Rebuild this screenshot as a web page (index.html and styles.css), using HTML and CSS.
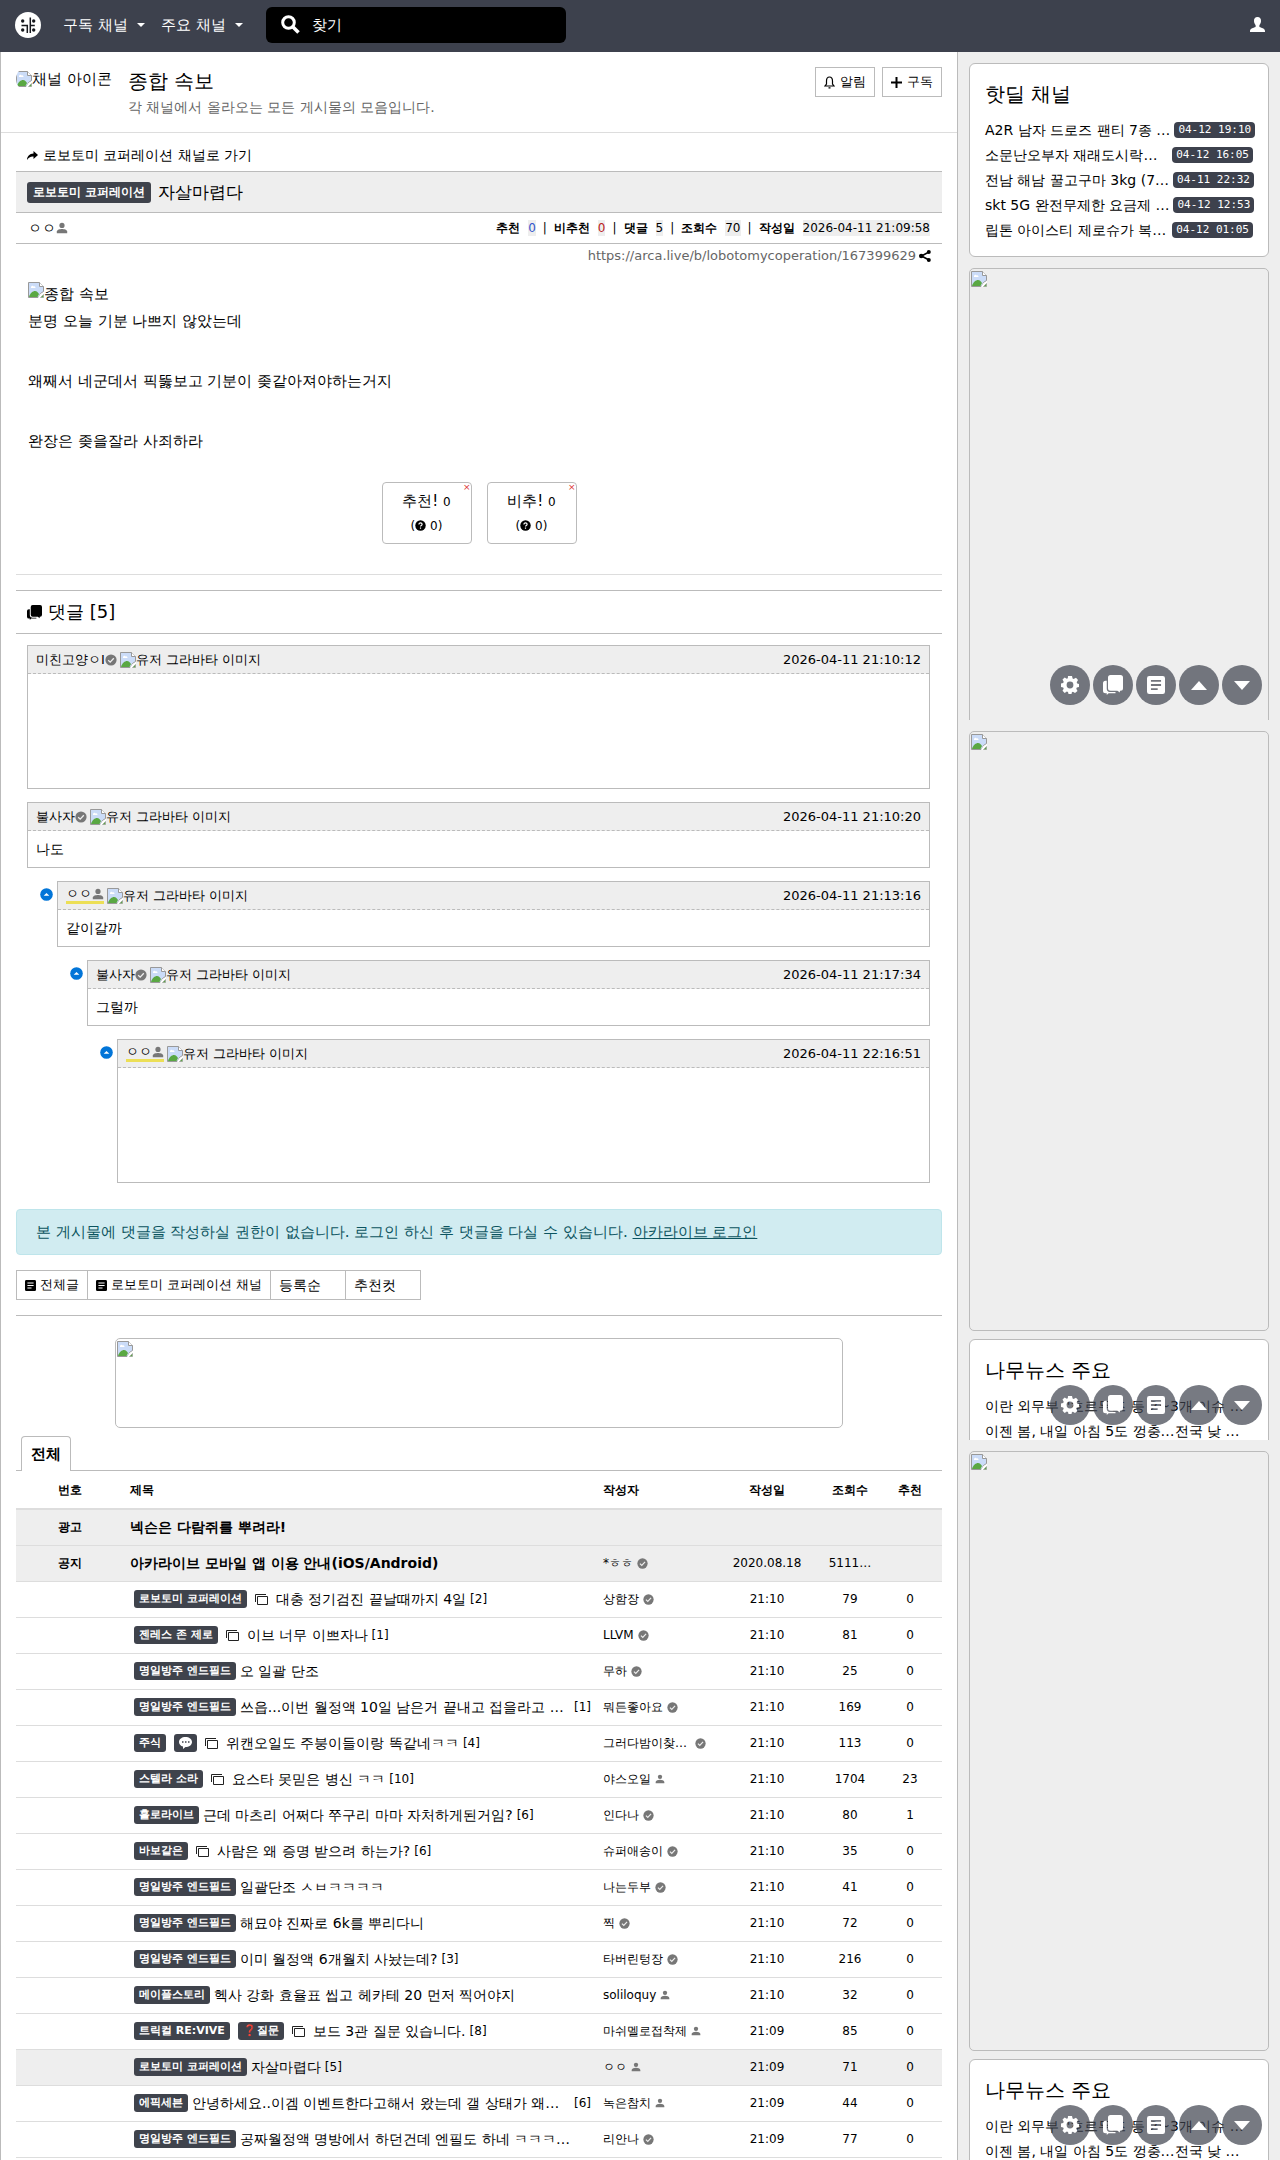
FILE: index.html
```
<!doctype html>
<html lang="ko">
<head>
    <meta charset="UTF-8">
    <meta name="viewport" content="width=device-width, initial-scale=1.0">
    <title>종합 속보 - 아카라이브</title>
    <link rel="stylesheet" href="styles.css">
</head>
<body>
<svg class="defs" aria-hidden="true">
    <symbol id="i-check" viewBox="0 0 12 12"><circle cx="6" cy="6" r="5.6" fill="#777"/><path d="M3.2 6.2l2 1.9 3.6-3.9" fill="none" stroke="#eee" stroke-width="1.3"/></symbol>
    <symbol id="i-user" viewBox="0 0 12 12"><circle cx="6" cy="3.4" r="2.6"/><path d="M.8 11.2V9.6C.8 7.8 4 7 6 7s5.2.8 5.2 2.6v1.6z"/></symbol>
    <symbol id="i-broken" viewBox="0 0 16 16"><path d="M.5.5h11l4 4v5l-3 2-2 4H.5z" fill="#cbdcf8" stroke="#999"/><path d="M11.5.5v4h4" fill="#fff" stroke="#999"/><path d="M3 5.5c0-2 2-2.500 2.500-1 1.500-.5 2 .5 2 1.500H3z" fill="#fff"/><path d="M1 15c1-4 4-6 6-6s3 1.500 4 3l-1.500 3z" fill="#5aa843"/><path d="M16 10l-4 2.500-2 3.500h2l4-4z" fill="#fff"/><path d="M12.500 15.500h3v-3z" fill="#5aa843" stroke="#999" stroke-width=".6"/></symbol>
    <symbol id="i-chat" viewBox="0 0 16 16"><path d="M6 0h8a2 2 0 0 1 2 2v8.500a2 2 0 0 1-2 2h-.5V14l-2-1.500H6a2 2 0 0 1-2-2V2a2 2 0 0 1 2-2z"/><path d="M3 4.500v6.500a2.500 2.500 0 0 0 2.500 2.500h4.500V14.500H4.500L3 16v-1.500H2a2 2 0 0 1-2-2V6.500a2 2 0 0 1 2-2z"/></symbol>
    <symbol id="i-list" viewBox="0 0 16 16"><path fill-rule="evenodd" d="M2 0h12a2 2 0 0 1 2 2v12a2 2 0 0 1-2 2H2a2 2 0 0 1-2-2V2a2 2 0 0 1 2-2zm1.500 3.500v1.600h9V3.500zm0 3.700v1.600h9V7.200zm0 3.700v1.600h6v-1.600z"/></symbol>
    <symbol id="i-gear" viewBox="0 0 18 18"><path fill-rule="evenodd" d="M7 0h4l.6 2.400 1 .5L15 1.700 17 4l-1.300 2.200.5 1.200L18 8v3l-2.200.6-.5 1.100L16.500 15 14 17l-2.100-1.200-1 .4L10.500 18h-3L7 16l-1.200-.4L3.700 17 1.500 14.700l1.200-2-.5-1.200L0 11V7.500l2.200-.6.5-1.100L1.500 3.500 3.700 1.500l2.100 1.200 1-.4zM9 5.600a3.400 3.400 0 1 0 0 6.800 3.400 3.400 0 0 0 0-6.800z"/></symbol>
    <symbol id="i-up" viewBox="0 0 16 9"><path d="M0 9L8 0l8 9z"/></symbol>
    <symbol id="i-down" viewBox="0 0 16 9"><path d="M0 0l8 9 8-9z"/></symbol>
    <symbol id="i-copy" viewBox="0 0 13 11"><path d="M.5 8V.5h10.500M2.500 2.500h10v8h-10z" fill="none" stroke="#222"/></symbol>
    <symbol id="i-reply" viewBox="0 0 13 13"><circle cx="6.500" cy="6.500" r="6.300" fill="#0275d8"/><path d="M3.700 7.700l2.800-2.600 2.800 2.600z" fill="#fff"/></symbol>
    <symbol id="i-help" viewBox="0 0 12 12"><circle cx="6" cy="6" r="5.700"/><path d="M4.300 4.800c0-2.300 3.500-2.200 3.400 0C7.700 5.900 6 6 6 7.200M6 8.200v1.300" fill="none" stroke="#fff" stroke-width="1.300"/></symbol>
</svg>

<nav class="navbar">
    <a class="logo" href="#" aria-label="아카라이브">
        <svg width="26" height="26" viewBox="0 0 26 26"><circle cx="13" cy="13" r="13" fill="#fff"/><g fill="#16181d"><circle cx="7.700" cy="9" r="1.700"/><circle cx="18.700" cy="9" r="1.700"/><circle cx="18.700" cy="18" r="1.700"/><circle cx="7.700" cy="18" r="1.700"/></g><path d="M6.500 13.500h5.800V21M15.300 5.500V21M15.300 13.500h4.500" fill="none" stroke="#16181d" stroke-width="1.500"/></svg>
    </a>
    <button class="menu" type="button">구독 채널<span class="caret"></span></button>
    <button class="menu" type="button">주요 채널<span class="caret"></span></button>
    <form class="search">
        <svg width="19" height="19" viewBox="0 0 19 19"><circle cx="7.500" cy="7.500" r="5.800" fill="none" stroke="#fff" stroke-width="3"/><path d="M12 12l5.500 5.500" stroke="#fff" stroke-width="3.600"/></svg>
        <input type="search" placeholder="찾기" aria-label="찾기">
    </form>
    <a class="account" href="#" aria-label="로그인"><svg width="15" height="15" viewBox="0 0 15 15"><path d="M7.500 0C10 0 11.200 1.800 11 4.200c-.1 1.900-1 3-1.600 3.800v2c2.400.9 5.600 1.500 5.600 4v1H0v-1c0-2.500 3.200-3.100 5.600-4V8C5 7.200 4.100 6.100 4 4.200 3.800 1.800 5 0 7.500 0z" fill="#fff"/></svg></a>
</nav>

<div class="content-wrapper">
    <main class="board">
        <header class="board-title">
            <span class="channel-icon"><svg width="16" height="16"><use href="#i-broken"/></svg>채널 아이콘</span>
            <div class="head">
                <h1>종합 속보</h1>
                <p>각 채널에서 올라오는 모든 게시물의 모음입니다.</p>
            </div>
            <div class="board-btns">
                <button type="button"><svg width="11" height="13" viewBox="0 0 11 13"><path d="M5.500 1C3.300 1 2.500 3 2.500 5v3L1 10h9L8.500 8V5c0-2-.8-4-3-4zM4.500 11.800h2" fill="none" stroke="#000" stroke-width="1.200"/></svg>알림</button>
                <button type="button"><svg width="11" height="11" viewBox="0 0 11 11"><path d="M5.500 0v11M0 5.500h11" stroke="#000" stroke-width="2"/></svg>구독</button>
            </div>
        </header>

        <article class="article">
            <a class="goto" href="#"><svg width="11" height="9" viewBox="0 0 11 9"><path d="M6.500 0L11 4 6.500 8V5.500C3.500 5.300 1.500 6.500 0 9c0-3.500 2.500-6.300 6.500-6.500z"/></svg>로보토미 코퍼레이션 채널로 가기</a>
            <div class="article-head">
                <span class="badge badge-lg">로보토미 코퍼레이션</span>
                <h2>자살마렵다</h2>
            </div>
            <div class="article-info">
                <span class="writer">ㅇㅇ<svg class="gray" width="12" height="12"><use href="#i-user"/></svg></span>
                <dl>
                    <dt>추천</dt><dd class="blue">0</dd>
                    <dt>비추천</dt><dd class="red">0</dd>
                    <dt>댓글</dt><dd>5</dd>
                    <dt>조회수</dt><dd>70</dd>
                    <dt>작성일</dt><dd>2026-04-11 21:09:58</dd>
                </dl>
            </div>
            <div class="article-link"><a href="#">https://arca.live/b/lobotomycoperation/167399629</a><svg width="12" height="12" viewBox="0 0 12 12"><path d="M10 2L2.500 6l7.500 4" fill="none" stroke="#000" stroke-width="1.600"/><circle cx="9.800" cy="2" r="2"/><circle cx="2.200" cy="6" r="2.200"/><circle cx="9.800" cy="10" r="2"/></svg></div>
            <div class="article-body">
                <div class="alt"><svg width="16" height="16"><use href="#i-broken"/></svg>종합 속보</div>
                <p>분명 오늘 기분 나쁘지 않았는데</p>
                <p>왜째서 네군데서 픽뚫보고 기분이 좆같아져야하는거지</p>
                <p>완장은 좆을잘라 사죄하라</p>
            </div>
            <div class="vote">
                <button type="button"><span class="x">×</span><span>추천! <small>0</small></span><small>(<svg width="11" height="11"><use href="#i-help"/></svg> 0)</small></button>
                <button type="button"><span class="x">×</span><span>비추! <small>0</small></span><small>(<svg width="11" height="11"><use href="#i-help"/></svg> 0)</small></button>
            </div>
        </article>

        <section class="comments">
            <h3><svg width="15" height="15"><use href="#i-chat"/></svg>댓글 [5]</h3>
            <div class="comment-list">
                <div class="comment tall">
                    <div class="box">
                        <div class="info"><span class="user">미친고양ㅇI<svg width="12" height="12"><use href="#i-check"/></svg></span><span class="alt"><svg width="16" height="16"><use href="#i-broken"/></svg>유저 그라바타 이미지</span><time>2026-04-11 21:10:12</time></div>
                        <div class="message"></div>
                    </div>
                </div>
                <div class="comment">
                    <div class="box">
                        <div class="info"><span class="user">불사자<svg width="12" height="12"><use href="#i-check"/></svg></span><span class="alt"><svg width="16" height="16"><use href="#i-broken"/></svg>유저 그라바타 이미지</span><time>2026-04-11 21:10:20</time></div>
                        <div class="message">나도</div>
                    </div>
                </div>
                <div class="comment depth1">
                    <svg class="arrow" width="13" height="13"><use href="#i-reply"/></svg>
                    <div class="box">
                        <div class="info"><span class="user mark">ㅇㅇ<svg class="gray" width="12" height="12"><use href="#i-user"/></svg></span><span class="alt"><svg width="16" height="16"><use href="#i-broken"/></svg>유저 그라바타 이미지</span><time>2026-04-11 21:13:16</time></div>
                        <div class="message">같이갈까</div>
                    </div>
                </div>
                <div class="comment depth2">
                    <svg class="arrow" width="13" height="13"><use href="#i-reply"/></svg>
                    <div class="box">
                        <div class="info"><span class="user">불사자<svg width="12" height="12"><use href="#i-check"/></svg></span><span class="alt"><svg width="16" height="16"><use href="#i-broken"/></svg>유저 그라바타 이미지</span><time>2026-04-11 21:17:34</time></div>
                        <div class="message">그럴까</div>
                    </div>
                </div>
                <div class="comment depth3 tall">
                    <svg class="arrow" width="13" height="13"><use href="#i-reply"/></svg>
                    <div class="box">
                        <div class="info"><span class="user mark">ㅇㅇ<svg class="gray" width="12" height="12"><use href="#i-user"/></svg></span><span class="alt"><svg width="16" height="16"><use href="#i-broken"/></svg>유저 그라바타 이미지</span><time>2026-04-11 22:16:51</time></div>
                        <div class="message"></div>
                    </div>
                </div>
            </div>
        </section>

        <div class="alert">본 게시물에 댓글을 작성하실 권한이 없습니다. 로그인 하신 후 댓글을 다실 수 있습니다. <a href="#">아카라이브 로그인</a></div>

        <div class="btns-board">
            <a href="#"><svg width="11" height="11"><use href="#i-list"/></svg>전체글</a>
            <a href="#"><svg width="11" height="11"><use href="#i-list"/></svg>로보토미 코퍼레이션 채널</a>
            <select aria-label="정렬"><option>등록순</option></select>
            <select aria-label="추천컷"><option>추천컷</option></select>
        </div>

        <div class="banner"><div class="ad"><svg width="16" height="16"><use href="#i-broken"/></svg></div></div>

        <div class="tabs"><a href="#">전체</a></div>

        <table class="list">
            <colgroup><col class="c-id"><col><col class="c-author"><col class="c-time"><col class="c-view"><col class="c-rate"></colgroup>
            <thead>
                <tr><th>번호</th><th class="l">제목</th><th class="l">작성자</th><th>작성일</th><th>조회수</th><th>추천</th></tr>
            </thead>
            <tbody>
                <tr class="notice"><td>광고</td><td class="l"><a href="#">넥슨은 다람쥐를 뿌려라!</a></td><td></td><td></td><td></td><td></td></tr>
                <tr class="notice"><td>공지</td><td class="l"><a href="#">아카라이브 모바일 앱 이용 안내(iOS/Android)</a></td><td class="l"><div class="author"><span>*ㅎㅎ</span><svg width="11" height="11"><use href="#i-check"/></svg></div></td><td>2020.08.18</td><td>5111…</td><td></td></tr>
                <tr><td></td><td class="l"><div class="title"><span class="badge">로보토미 코퍼레이션</span><svg class="copy" width="13" height="11"><use href="#i-copy"/></svg><a href="#">대충 정기검진 끝날때까지 4일</a><small>[2]</small></div></td><td class="l"><div class="author"><span>상함장</span><svg width="11" height="11"><use href="#i-check"/></svg></div></td><td>21:10</td><td>79</td><td>0</td></tr>
                <tr><td></td><td class="l"><div class="title"><span class="badge">젠레스 존 제로</span><svg class="copy" width="13" height="11"><use href="#i-copy"/></svg><a href="#">이브 너무 이쁘자나</a><small>[1]</small></div></td><td class="l"><div class="author"><span>LLVM</span><svg width="11" height="11"><use href="#i-check"/></svg></div></td><td>21:10</td><td>81</td><td>0</td></tr>
                <tr><td></td><td class="l"><div class="title"><span class="badge">명일방주 엔드필드</span><a href="#">오 일괄 단조</a></div></td><td class="l"><div class="author"><span>무하</span><svg width="11" height="11"><use href="#i-check"/></svg></div></td><td>21:10</td><td>25</td><td>0</td></tr>
                <tr><td></td><td class="l"><div class="title"><span class="badge">명일방주 엔드필드</span><a href="#">쓰읍...이번 월정액 10일 남은거 끝내고 접을라고 …</a><small class="end">[1]</small></div></td><td class="l"><div class="author"><span>뭐든좋아요</span><svg width="11" height="11"><use href="#i-check"/></svg></div></td><td>21:10</td><td>169</td><td>0</td></tr>
                <tr><td></td><td class="l"><div class="title"><span class="badge">주식</span><span class="badge sub"><svg width="13" height="12" viewBox="0 0 13 12"><path d="M6.500 0C10 0 13 2 13 5s-3 5-6.500 5L4 12V9.600C1.500 9 0 7 0 5c0-3 3-5 6.500-5z" fill="#fff"/><path d="M3 5h1.500M6 5h1.500M9 5h1.500" stroke="#3f434c" stroke-width="1.500"/></svg></span><svg class="copy" width="13" height="11"><use href="#i-copy"/></svg><a href="#">위캔오일도 주붕이들이랑 똑같네ㅋㅋ</a><small>[4]</small></div></td><td class="l"><div class="author"><span>그러다밤이찾…</span><svg class="end" width="11" height="11"><use href="#i-check"/></svg></div></td><td>21:10</td><td>113</td><td>0</td></tr>
                <tr><td></td><td class="l"><div class="title"><span class="badge">스텔라 소라</span><svg class="copy" width="13" height="11"><use href="#i-copy"/></svg><a href="#">요스타 못믿은 병신 ㅋㅋ</a><small>[10]</small></div></td><td class="l"><div class="author"><span>야스오일</span><svg class="gray" width="10" height="10"><use href="#i-user"/></svg></div></td><td>21:10</td><td>1704</td><td>23</td></tr>
                <tr><td></td><td class="l"><div class="title"><span class="badge">홀로라이브</span><a href="#">근데 마츠리 어쩌다 쭈구리 마마 자처하게된거임?</a><small>[6]</small></div></td><td class="l"><div class="author"><span>인다나</span><svg width="11" height="11"><use href="#i-check"/></svg></div></td><td>21:10</td><td>80</td><td>1</td></tr>
                <tr><td></td><td class="l"><div class="title"><span class="badge">바보같은</span><svg class="copy" width="13" height="11"><use href="#i-copy"/></svg><a href="#">사람은 왜 증명 받으려 하는가?</a><small>[6]</small></div></td><td class="l"><div class="author"><span>슈퍼애송이</span><svg width="11" height="11"><use href="#i-check"/></svg></div></td><td>21:10</td><td>35</td><td>0</td></tr>
                <tr><td></td><td class="l"><div class="title"><span class="badge">명일방주 엔드필드</span><a href="#">일괄단조 ㅅㅂㅋㅋㅋㅋ</a></div></td><td class="l"><div class="author"><span>나는두부</span><svg width="11" height="11"><use href="#i-check"/></svg></div></td><td>21:10</td><td>41</td><td>0</td></tr>
                <tr><td></td><td class="l"><div class="title"><span class="badge">명일방주 엔드필드</span><a href="#">해묘야 진짜로 6k를 뿌리다니</a></div></td><td class="l"><div class="author"><span>찍</span><svg width="11" height="11"><use href="#i-check"/></svg></div></td><td>21:10</td><td>72</td><td>0</td></tr>
                <tr><td></td><td class="l"><div class="title"><span class="badge">명일방주 엔드필드</span><a href="#">이미 월정액 6개월치 사놨는데?</a><small>[3]</small></div></td><td class="l"><div class="author"><span>타버린텅장</span><svg width="11" height="11"><use href="#i-check"/></svg></div></td><td>21:10</td><td>216</td><td>0</td></tr>
                <tr><td></td><td class="l"><div class="title"><span class="badge">메이플스토리</span><a href="#">헥사 강화 효율표 씹고 헤카테 20 먼저 찍어야지</a></div></td><td class="l"><div class="author"><span>soliloquy</span><svg class="gray" width="10" height="10"><use href="#i-user"/></svg></div></td><td>21:10</td><td>32</td><td>0</td></tr>
                <tr><td></td><td class="l"><div class="title"><span class="badge">트릭컬 RE:VIVE</span><span class="badge sub">❓질문</span><svg class="copy" width="13" height="11"><use href="#i-copy"/></svg><a href="#">보드 3관 질문 있습니다.</a><small>[8]</small></div></td><td class="l"><div class="author"><span>마쉬멜로접착제</span><svg class="gray" width="10" height="10"><use href="#i-user"/></svg></div></td><td>21:09</td><td>85</td><td>0</td></tr>
                <tr class="active"><td></td><td class="l"><div class="title"><span class="badge">로보토미 코퍼레이션</span><a href="#">자살마렵다</a><small>[5]</small></div></td><td class="l"><div class="author"><span>ㅇㅇ</span><svg class="gray" width="10" height="10"><use href="#i-user"/></svg></div></td><td>21:09</td><td>71</td><td>0</td></tr>
                <tr><td></td><td class="l"><div class="title"><span class="badge">에픽세븐</span><a href="#">안녕하세요..이겜 이벤트한다고해서 왔는데 갤 상태가 왜…</a><small class="end">[6]</small></div></td><td class="l"><div class="author"><span>녹은참치</span><svg class="gray" width="10" height="10"><use href="#i-user"/></svg></div></td><td>21:09</td><td>44</td><td>0</td></tr>
                <tr><td></td><td class="l"><div class="title"><span class="badge">명일방주 엔드필드</span><a href="#">공짜월정액 명방에서 하던건데 엔필도 하네 ㅋㅋㅋ…</a></div></td><td class="l"><div class="author"><span>리안나</span><svg width="11" height="11"><use href="#i-check"/></svg></div></td><td>21:09</td><td>77</td><td>0</td></tr>
            </tbody>
        </table>
    </main>

    <aside class="sidebar">
        <div class="screen first">
            <section class="card">
                <h3>핫딜 채널</h3>
                <ul>
                    <li><a href="#">A2R 남자 드로즈 팬티 7종 …</a><time>04-12 19:10</time></li>
                    <li><a href="#">소문난오부자 재래도시락…</a><time>04-12 16:05</time></li>
                    <li><a href="#">전남 해남 꿀고구마 3kg (7…</a><time>04-11 22:32</time></li>
                    <li><a href="#">skt 5G 완전무제한 요금제 …</a><time>04-12 12:53</time></li>
                    <li><a href="#">립톤 아이스티 제로슈가 복…</a><time>04-12 01:05</time></li>
                </ul>
            </section>
            <div class="ad side-ad"><svg width="16" height="16"><use href="#i-broken"/></svg></div>
            <div class="nav-control">
                <button type="button" aria-label="설정"><svg width="18" height="18"><use href="#i-gear"/></svg></button>
                <button type="button" aria-label="댓글"><svg width="20" height="20"><use href="#i-chat"/></svg></button>
                <button type="button" aria-label="글목록"><svg width="18" height="18"><use href="#i-list"/></svg></button>
                <button type="button" aria-label="위로"><svg width="16" height="9"><use href="#i-up"/></svg></button>
                <button type="button" aria-label="아래로"><svg width="16" height="9"><use href="#i-down"/></svg></button>
            </div>
        </div>
        <div class="screen">
            <div class="ad side-ad"><svg width="16" height="16"><use href="#i-broken"/></svg></div>
            <section class="card">
                <h3>나무뉴스 주요</h3>
                <ul>
                    <li><a href="#">이란 외무부 "호르무즈 등 2~3개 이슈 …</a></li>
                    <li><a href="#">이젠 봄, 내일 아침 5도 껑충…전국 낮 …</a></li>
                </ul>
            </section>
            <div class="nav-control">
                <button type="button" aria-label="설정"><svg width="18" height="18"><use href="#i-gear"/></svg></button>
                <button type="button" aria-label="댓글"><svg width="20" height="20"><use href="#i-chat"/></svg></button>
                <button type="button" aria-label="글목록"><svg width="18" height="18"><use href="#i-list"/></svg></button>
                <button type="button" aria-label="위로"><svg width="16" height="9"><use href="#i-up"/></svg></button>
                <button type="button" aria-label="아래로"><svg width="16" height="9"><use href="#i-down"/></svg></button>
            </div>
        </div>
        <div class="screen">
            <div class="ad side-ad"><svg width="16" height="16"><use href="#i-broken"/></svg></div>
            <section class="card">
                <h3>나무뉴스 주요</h3>
                <ul>
                    <li><a href="#">이란 외무부 "호르무즈 등 2~3개 이슈 …</a></li>
                    <li><a href="#">이젠 봄, 내일 아침 5도 껑충…전국 낮 …</a></li>
                </ul>
            </section>
            <div class="nav-control">
                <button type="button" aria-label="설정"><svg width="18" height="18"><use href="#i-gear"/></svg></button>
                <button type="button" aria-label="댓글"><svg width="20" height="20"><use href="#i-chat"/></svg></button>
                <button type="button" aria-label="글목록"><svg width="18" height="18"><use href="#i-list"/></svg></button>
                <button type="button" aria-label="위로"><svg width="16" height="9"><use href="#i-up"/></svg></button>
                <button type="button" aria-label="아래로"><svg width="16" height="9"><use href="#i-down"/></svg></button>
            </div>
        </div>
    </aside>
</div>
</body>
</html>
```
FILE: styles.css
```
*{
    box-sizing: border-box;
    margin: 0;
    padding: 0;
}
body{
    background: #eee;
    color: #000;
    font: 15px/24px "DejaVu Sans", sans-serif;
}
a{
    color: inherit;
    text-decoration: none;
}
button, input, select{
    font: inherit;
    color: inherit;
}
h1, h2, h3{
    font-weight: normal;
}
ul{
    list-style: none;
}
svg{
    flex: none;
}
small{
    font-size: 12px;
}
.defs{
    position: absolute;
    width: 0;
    height: 0;
}
.gray{
    fill: #777;
}

/* navbar */
.navbar{
    display: flex;
    align-items: center;
    height: 52px;
    padding: 0 15px 3px;
    background: #3d414d;
    color: #fff;
}
.logo{
    display: flex;
    margin-right: 22px;
}
.menu{
    display: flex;
    align-items: center;
    gap: 9px;
    margin-right: 16px;
    background: none;
    border: 0;
}
.caret{
    border: 4px solid transparent;
    border-top-color: #fff;
    border-bottom: 0;
}
.search{
    display: flex;
    align-items: center;
    gap: 12px;
    width: 300px;
    height: 36px;
    margin-left: 7px;
    padding: 0 15px;
    background: #000;
    border-radius: 6px;
}
.search input{
    flex: 1;
    min-width: 0;
    background: none;
    border: 0;
    outline: 0;
}
.search input::placeholder{
    color: #fff;
    opacity: 1;
}
.account{
    display: flex;
    margin-left: auto;
}

/* layout */
.content-wrapper{
    display: flex;
}
.board{
    flex: 1;
    min-width: 0;
    padding: 0 15px;
    background: #fff;
    border: solid #bbb;
    border-width: 0 1px;
}
.sidebar{
    width: 322px;
    flex: none;
}

/* board title */
.board-title{
    display: flex;
    align-items: flex-start;
    height: 81px;
    margin: 0 -15px;
    padding: 15px;
    border-bottom: 1px solid #ddd;
}
.channel-icon{
    display: flex;
    align-items: center;
    width: 96px;
    height: 24px;
    margin-right: 16px;
    overflow: hidden;
    border-radius: 12px;
    white-space: nowrap;
}
.head{
    flex: 1;
}
.head h1{
    font-size: 20px;
    line-height: 28px;
}
.head p{
    color: #666;
    font-size: 14px;
}
.board-btns{
    display: flex;
    gap: 7px;
}
.board-btns button{
    display: flex;
    align-items: center;
    gap: 5px;
    height: 30px;
    padding: 0 8px;
    background: #fff;
    border: 1px solid #bbb;
    font-size: 13px;
}

/* article */
.article{
    border-bottom: 1px solid #ddd;
}
.goto{
    display: flex;
    align-items: center;
    gap: 5px;
    height: 38px;
    padding: 6px 11px 0;
    font-size: 14px;
}
.article-head{
    display: flex;
    align-items: center;
    gap: 7px;
    height: 42px;
    padding: 0 11px;
    background: #eee;
    border: solid #bbb;
    border-width: 1px 0;
}
.article-head h2{
    font-size: 17px;
}
.badge{
    display: inline-flex;
    align-items: center;
    flex: none;
    height: 18px;
    margin: 0 4px;
    padding: 0 5px;
    background: #3f434c;
    border-radius: 3px;
    color: #fff;
    font-size: 11px;
    font-weight: bold;
    line-height: 18px;
    white-space: nowrap;
}
.badge-lg{
    height: 21px;
    margin: 0;
    padding: 0 6px;
    font-size: 12px;
}
.article-info{
    display: flex;
    align-items: center;
    justify-content: space-between;
    height: 31px;
    padding: 0 12px;
    border-bottom: 1px solid #bbb;
    font-size: 12px;
}
.writer{
    display: flex;
    align-items: center;
    font-size: 14px;
}
.article-info dl{
    display: flex;
    line-height: 16px;
}
.article-info dt{
    margin-right: 8px;
    font-weight: bold;
}
.article-info dd{
    background: #eee;
}
.article-info dd + dt::before{
    content: "|";
    margin: 0 7px;
    font-weight: normal;
}
.article-info .blue{
    color: #35c;
}
.article-info .red{
    color: #b22;
}
.article-link{
    display: flex;
    align-items: center;
    justify-content: flex-end;
    gap: 3px;
    padding: 0 11px;
    color: #666;
    font-size: 13px;
}
.article-body{
    padding: 14px 12px 0;
}
.alt{
    display: flex;
}
.article-body p{
    margin-bottom: 30px;
    line-height: 30px;
}
.article-body p:last-child{
    margin-bottom: 26px;
}
.vote{
    display: flex;
    justify-content: center;
    gap: 15px;
    padding-bottom: 30px;
}
.vote button{
    position: relative;
    display: flex;
    flex-direction: column;
    align-items: center;
    width: 90px;
    height: 62px;
    padding-top: 6px;
    background: #fff;
    border: 1px solid #bbb;
    border-radius: 4px;
}
.vote small svg{
    vertical-align: -1px;
}
.vote .x{
    position: absolute;
    top: 0;
    right: 0;
    color: #d33;
    font-size: 9px;
    line-height: 8px;
}

/* comments */
.comments{
    margin-top: 15px;
    border-top: 1px solid #bbb;
}
.comments h3{
    display: flex;
    align-items: center;
    gap: 6px;
    height: 43px;
    padding: 0 11px;
    border-bottom: 1px solid #bbb;
    font-size: 18px;
}
.comment-list{
    display: flex;
    flex-direction: column;
    gap: 13px;
    padding: 11px 12px 26px 11px;
}
.comment{
    display: flex;
    align-items: flex-start;
}
.arrow{
    margin: 7px 4px 0 0;
}
.depth1{
    padding-left: 13px;
}
.depth2{
    padding-left: 43px;
}
.depth3{
    padding-left: 73px;
}
.box{
    flex: 1;
    border: 1px solid #bbb;
}
.info{
    display: flex;
    align-items: center;
    height: 28px;
    padding: 0 8px;
    background: #eee;
    border-bottom: 1px dashed #bbb;
    font-size: 13px;
}
.info .alt{
    align-items: center;
}
.info time{
    margin-left: auto;
}
.user{
    display: flex;
    align-items: center;
    margin-right: 3px;
}
.mark{
    height: 17px;
    border-bottom: 3px solid #ecdf56;
}
.message{
    height: 36px;
    padding: 6px 8px;
    font-size: 14px;
}
.tall .message{
    height: 114px;
}
.alert{
    padding: 10px 19px;
    background: #d1ecf1;
    border: 1px solid #bee5eb;
    border-radius: 4px;
    color: #0c5460;
}
.alert a{
    text-decoration: underline;
}

/* board buttons */
.btns-board{
    display: flex;
    padding: 15px 0;
    border-bottom: 1px solid #bbb;
}
.btns-board a, .btns-board select{
    display: flex;
    align-items: center;
    gap: 4px;
    height: 30px;
    padding: 0 8px;
    background: #fff;
    border: 1px solid #bbb;
    font-size: 13px;
}
.btns-board > * + *{
    margin-left: -1px;
}
.btns-board select{
    width: 76px;
    appearance: none;
    border-radius: 0;
    font-size: 14px;
}

/* ads */
.banner{
    padding: 22px 99px 8px;
}
.ad{
    height: 90px;
    padding: 1px;
    overflow: hidden;
    border: 1px solid #bbb;
    border-radius: 5px;
}
.side-ad{
    height: 600px;
}

/* article list */
.tabs{
    display: flex;
    height: 35px;
    padding-left: 5px;
    border-bottom: 1px solid #bbb;
}
.tabs a{
    height: 35px;
    padding: 5px 9px;
    background: #fff;
    border: 1px solid #bbb;
    border-bottom: 0;
    border-radius: 4px 4px 0 0;
    font-weight: bold;
}
.list{
    width: 100%;
    table-layout: fixed;
    border-collapse: collapse;
    font-size: 12px;
    text-align: center;
}
.c-id{
    width: 108px;
}
.c-author{
    width: 115px;
}
.c-time{
    width: 110px;
}
.c-view{
    width: 56px;
}
.c-rate{
    width: 64px;
}
.list th{
    height: 38px;
    border-bottom: 2px solid #ddd;
}
.list td{
    height: 36px;
    border-bottom: 1px solid #ddd;
}
.list .l{
    padding: 0 6px;
    text-align: left;
}
.notice{
    background: #eee;
}
.notice td:first-child, .notice a{
    font-weight: bold;
}
.list a{
    font-size: 14px;
}
.active{
    background: #eee;
}
.title, .author{
    display: flex;
    align-items: center;
}
.title a, .author span{
    white-space: nowrap;
}
.title small{
    margin-left: 4px;
}
.title .end, .author .end{
    margin-left: auto;
}
.sub{
    margin-left: 4px;
}
.copy{
    margin: 0 8px 0 4px;
}
.author{
    gap: 4px;
}

/* sidebar */
.screen{
    position: relative;
    height: 720px;
    padding: 11px 11px 0;
    overflow: hidden;
}
.first{
    height: 668px;
}
.card{
    margin-bottom: 11px;
    padding: 15px 15px 14px;
    background: #fff;
    border: 1px solid #bbb;
    border-radius: 6px;
}
.side-ad + .card{
    margin-top: 8px;
}
.card h3{
    margin-bottom: 8px;
    font-size: 20px;
    line-height: 30px;
}
.card li{
    display: flex;
    align-items: center;
    justify-content: space-between;
    gap: 4px;
    height: 25px;
    font-size: 14px;
    white-space: nowrap;
}
.card time{
    padding: 0 4px;
    background: #3d414d;
    border-radius: 4px;
    color: #fff;
    font: 11px/16px "DejaVu Sans Mono", monospace;
}
.nav-control{
    position: absolute;
    right: 18px;
    bottom: 15px;
    display: flex;
    gap: 3px;
}
.nav-control button{
    display: flex;
    align-items: center;
    justify-content: center;
    width: 40px;
    height: 40px;
    background: rgba(61, 65, 77, .7);
    border: 0;
    border-radius: 50%;
    fill: #fff;
}
```
